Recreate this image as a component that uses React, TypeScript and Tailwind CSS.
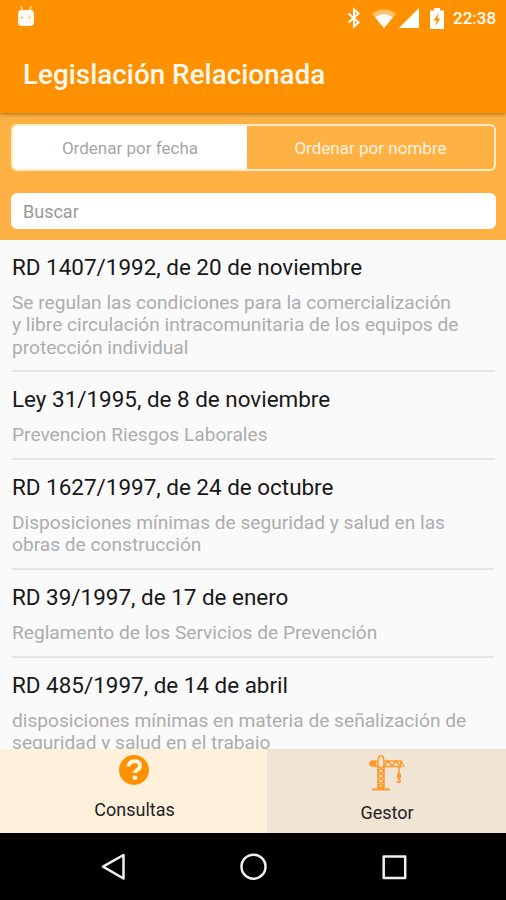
interface Ley {
  id: number;
  titulo: string;
  lineas: string[];
}

const LEYES: Ley[] = [
  {
    id: 1,
    titulo: 'RD 1407/1992, de 20 de noviembre',
    lineas: [
      'Se regulan las condiciones para la comercialización',
      'y libre circulación intracomunitaria de los equipos de',
      'protección individual',
    ],
  },
  { id: 2, titulo: 'Ley 31/1995, de 8 de noviembre', lineas: ['Prevencion Riesgos Laborales'] },
  {
    id: 3,
    titulo: 'RD 1627/1997, de 24 de octubre',
    lineas: ['Disposiciones mínimas de seguridad y salud en las', 'obras de construcción'],
  },
  { id: 4, titulo: 'RD 39/1997, de 17 de enero', lineas: ['Reglamento de los Servicios de Prevención'] },
  {
    id: 5,
    titulo: 'RD 485/1997, de 14 de abril',
    lineas: ['disposiciones mínimas en materia de señalización de', 'seguridad y salud en el trabajo'],
  },
];

function StatusBar() {
  return (
    <div className="flex h-9 items-center pl-[17px] pr-[11px] text-white">
      <svg width="18" height="22" viewBox="0 0 18 22" className="mb-1">
        <path d="M4 1l1.500 6M14 1l-1.500 6" stroke="#ffe0b2" strokeWidth="1.500" fill="none" />
        <path d="M1 9q0-4 4-4h8q4 0 4 4v8q0 4-4 4H5q-4 0-4-4z" fill="#fffaf2" />
        <circle cx="5" cy="12.500" r="1.100" fill="#ffb24d" />
        <circle cx="12.500" cy="12.500" r="1.100" fill="#ffb24d" />
      </svg>
      <svg width="14" height="22" viewBox="0 0 14 22" className="ml-auto" fill="none" stroke="currentColor" strokeWidth="2">
        <path d="M1.500 6.500l10 9L7 19.500V2.500l4.500 4-10 9" />
      </svg>
      <svg width="24" height="19" viewBox="0 0 24 19" className="ml-[11px]">
        <path d="M0 4.500C7-.8 17-.8 24 4.500L12 19z" fill="#ffc16b" />
        <path d="M3.200 8.300c5.500-4 12-4 17.600 0L12 19z" fill="currentColor" />
      </svg>
      <svg width="20" height="20" viewBox="0 0 20 20" className="ml-[3px]">
        <path d="M0 20L20 0v20z" fill="currentColor" />
      </svg>
      <svg width="14" height="21" viewBox="0 0 14 21" className="ml-[11px]">
        <path d="M4 0h6v2.500h4V21H0V2.500h4z" fill="currentColor" />
        <path d="M9 5L3.500 12.500h3L5 18l5.500-7.500h-3z" fill="#ff9100" />
      </svg>
      <span className="ml-[9px] w-[42px] text-[17px] font-medium leading-none whitespace-nowrap">22:38</span>
    </div>
  );
}

function CraneIcon() {
  return (
    <svg width="38" height="37" viewBox="0 0 38 37" fill="none" stroke="#ff9a2a" strokeWidth="1.500">
      <path d="M10 35V6l1.500-4h3L16 6v29M10 12l6 5-6 5 6 5-6 5 6 3M16 12l-6 5 6 5-6 5 6 5-6 3" />
      <path d="M16 7h17l3 6M16 12.500h18M16 12l4-5 4 5 4-5 4 5 1-5" />
      <path d="M10 7H6M10 12H6" />
      <circle cx="4.500" cy="9.500" r="2.500" fill="#ff9a2a" />
      <path d="M7 7v5.500" strokeWidth="2.500" />
      <path d="M4 35.500h18" strokeWidth="2" />
      <path d="M31 12v9" />
      <path d="M29.500 20h3v4h-3z" fill="#ff9a2a" strokeWidth="1" />
      <path d="M31 24v2c3 1 1 3.500-2.500 1.500" />
    </svg>
  );
}

function QuestionIcon() {
  return (
    <svg width="30" height="30" viewBox="0 0 30 30">
      <circle cx="15" cy="15" r="15" fill="#ff9100" />
      <path d="M9.500 11.500c.3-7 11.500-7 11.500-.8 0 4.300-5 3.900-5 7.300" fill="none" stroke="#fff3e0" strokeWidth="4" />
      <rect x="13.600" y="20.500" width="4.500" height="4.300" rx="1.500" fill="#fff3e0" />
    </svg>
  );
}

function NavBar() {
  return (
    <nav className="flex h-[67px] items-center justify-between bg-black pl-[99px] pr-[98px]">
      <svg width="28" height="30" viewBox="0 0 28 30" fill="none" stroke="#f0f0f0" strokeWidth="2.500" strokeLinejoin="round">
        <path d="M24.500 3v23.500L4 14.700z" />
      </svg>
      <svg width="28" height="30" viewBox="0 0 28 30" fill="none" stroke="#f0f0f0" strokeWidth="2.500">
        <circle cx="13.500" cy="14.700" r="12" />
      </svg>
      <svg width="28" height="30" viewBox="0 0 28 30" fill="none" stroke="#f0f0f0" strokeWidth="2.500" strokeLinejoin="round">
        <rect x="3.700" y="4.500" width="21.500" height="21.500" />
      </svg>
    </nav>
  );
}

export default function App() {
  return (
    <div className="flex h-[900px] w-[506px] flex-col overflow-hidden bg-[#fafafa] font-['Roboto',sans-serif]">
      <header className="relative h-[113px] shrink-0 bg-[#ff9100] shadow-[0_1px_4px_rgba(90,60,0,0.6)]">
        <StatusBar />
        <h1 className="mt-[22px] pl-[23px] text-[27.850px] font-medium leading-[34px] text-[#fff8ee] whitespace-nowrap">
          Legislación Relacionada
        </h1>
      </header>

      <div className="h-[127px] shrink-0 bg-[#ffb143] pl-[11px] pr-[10px] pt-[11px]">
        <div className="flex h-[47px] overflow-hidden rounded-md border-2 border-[#ffebc9] text-[17.050px]">
          <button className="w-[234px] bg-white pt-[2px] text-[#a6a6a6]">Ordenar por fecha</button>
          <button className="flex-1 pt-[2px] text-[#fff3e0]">Ordenar por nombre</button>
        </div>
        <input
          type="text"
          placeholder="Buscar"
          className="mt-[22px] block h-[36px] w-full rounded-md bg-white px-3 pt-px text-[18px] placeholder:text-[#999999] focus:outline-none"
        />
      </div>

      <main className="min-h-0 flex-1 overflow-hidden px-3">
        {LEYES.map((ley) => (
          <article key={ley.id} className="-mr-px border-b-2 border-[#e6e6e6] pt-3 pb-[11.500px]">
            <h2 className="text-[22.450px] leading-[30px] text-[#181818] whitespace-nowrap">{ley.titulo}</h2>
            <p className="mt-[10px] text-[19.150px] leading-[22.300px] text-[#adadad]">
              {ley.lineas.map((linea) => (
                <span key={linea} className="block whitespace-nowrap">{linea}</span>
              ))}
            </p>
          </article>
        ))}
      </main>

      <div className="flex h-[84px] shrink-0 text-[18px] text-[#222222]">
        <button className="flex w-[267px] flex-col items-center bg-[#fff0dc] pt-[6px]">
          <QuestionIcon />
          <span className="mt-[12px] pl-[2px] leading-[26px]">Consultas</span>
        </button>
        <button className="flex flex-1 flex-col items-center bg-[#f0e5d5] pt-[5px]">
          <CraneIcon />
          <span className="mt-[9px] pl-px leading-[26px]">Gestor</span>
        </button>
      </div>

      <NavBar />
    </div>
  );
}
